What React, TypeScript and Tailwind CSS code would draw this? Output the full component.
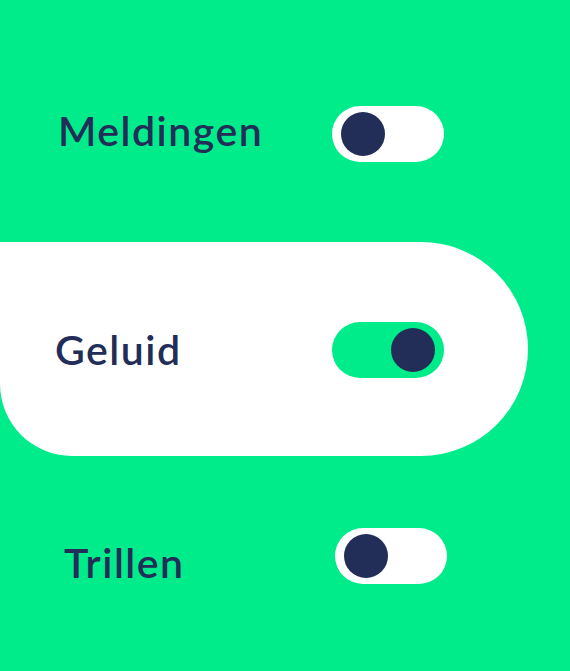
function Toggle({ on, className = "" }: { on: boolean; className?: string }) {
  return (
    <div
      className={`flex h-[56px] w-[112px] items-center rounded-full px-[9px] ${
        on ? "justify-end bg-[#00eb89]" : "justify-start bg-white"
      } ${className}`}
    >
      <div className="h-[44px] w-[44px] rounded-full bg-[#222d58]" />
    </div>
  );
}

export default function App() {
  const label = "text-[41px] font-semibold leading-none text-[#222d58] tracking-[1.5px]";

  return (
    <div
      className="flex h-[671px] w-full flex-col bg-[#00eb89]"
      style={{ fontFamily: "Lato, 'Noto Sans', sans-serif" }}
    >
      <div className="mt-[105px] flex h-[57px] items-center">
        <span className={`${label} ml-[58px] w-[274px] -translate-y-[3px]`}>Meldingen</span>
        <Toggle on={false} />
      </div>

      <div className="mt-[80px] flex h-[214px] w-[528px] items-center rounded-bl-[72px] rounded-r-[107px] bg-white">
        <span className={`${label} ml-[55px] w-[277px]`}>Geluid</span>
        <Toggle on className="mt-[2px]" />
      </div>

      <div className="mt-[72px] flex h-[56px] items-center">
        <span className={`${label} ml-[64px] w-[271px] translate-y-[6px]`}>Trillen</span>
        <Toggle on={false} />
      </div>
    </div>
  );
}
